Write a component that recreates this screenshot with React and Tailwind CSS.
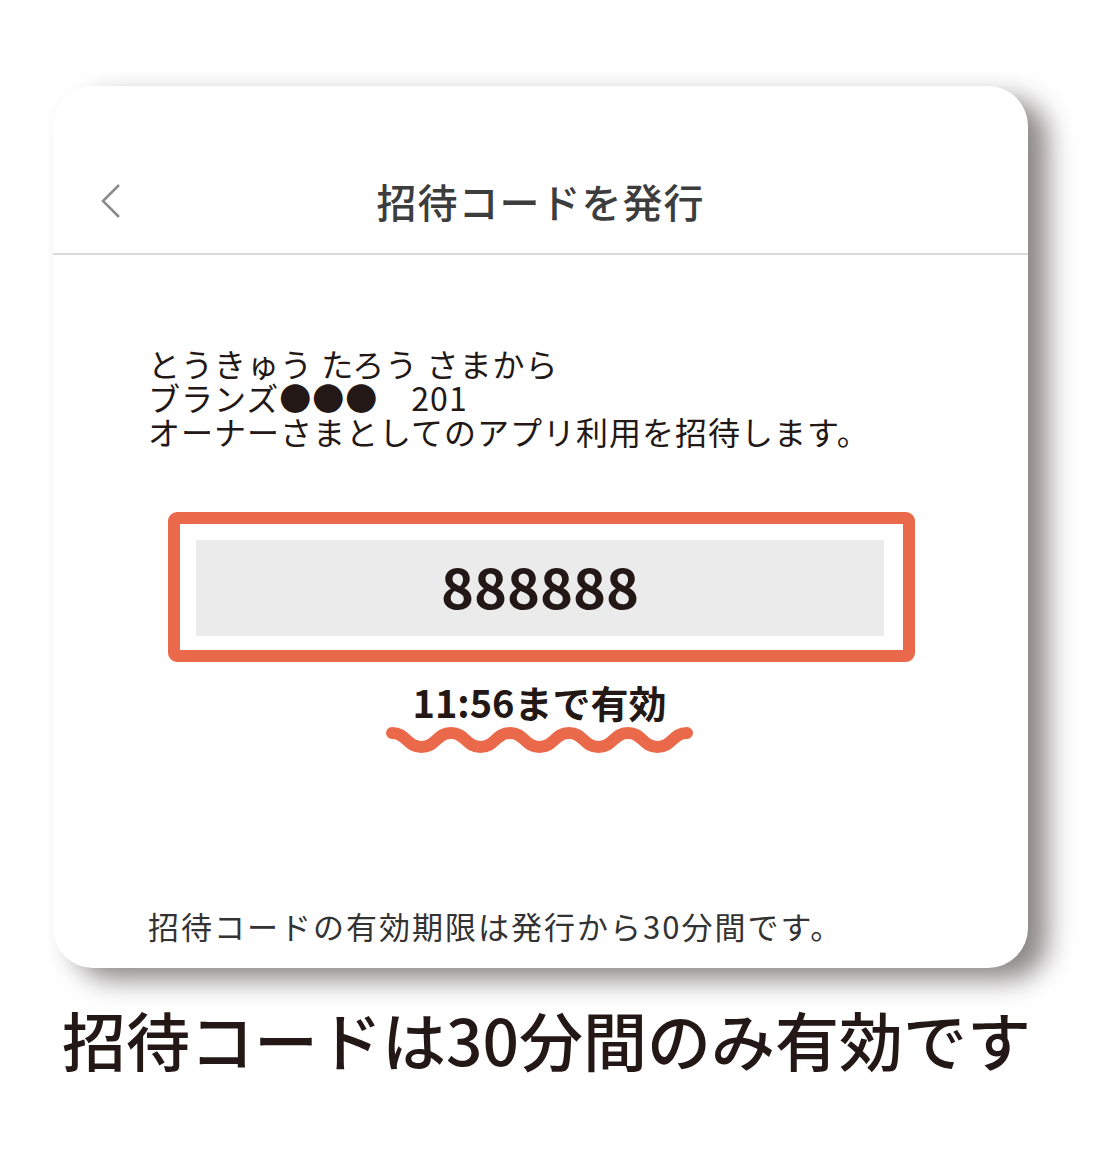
import React from "react";

const jp = { fontFamily: '"Noto Sans CJK JP", "Noto Sans", sans-serif' };

function Wave() {
  // 5 waves, crest at y=8, trough at y=22
  let d = "M6 8";
  for (let i = 0; i < 5; i++) {
    const x = 6 + i * 59;
    d += ` C ${x + 14.75} 8, ${x + 14.75} 22, ${x + 29.5} 22 C ${x + 44.25} 22, ${x + 44.25} 8, ${x + 59} 8`;
  }
  return (
    <svg width="307" height="30" viewBox="0 0 307 30" className="block">
      <path d={d} fill="none" stroke="#E9694A" strokeWidth="12" strokeLinecap="round" />
    </svg>
  );
}

export default function App() {
  return (
    <div className="w-[1104px] h-[1149px] bg-white overflow-hidden text-[#231815]" style={jp}>
      <div className="pt-[86px] pl-[53px]">
        <div className="w-[975px] h-[882px] bg-white rounded-[40px] shadow-[20px_12px_26px_rgba(50,40,40,0.55)] flex flex-col">
          <div className="h-[169px] border-b-2 border-[#d9d9d9] flex items-end pb-[28px] relative">
            <svg width="24" height="36" viewBox="0 0 24 36" className="absolute left-[46px] top-[97px]">
              <path d="M20 2 L4 18 L20 34" fill="none" stroke="#8a8a8a" strokeWidth="2.5" />
            </svg>
            <div className="w-full text-center text-[40px] leading-[48px] font-medium text-[#3d3d3d] tracking-[1px]">
              招待コードを発行
            </div>
          </div>

          <div className="pl-[95px] pt-[91px] text-[32px] leading-[34px] tracking-[1px]">
            <p>とうきゅう たろう さまから</p>
            <p>ブランズ●●●　201</p>
            <p>オーナーさまとしてのアプリ利用を招待します。</p>
          </div>

          <div className="mt-[64px] ml-[115px] w-[747px] h-[150px] border-[12px] border-[#E9694A] rounded-[9px] p-[16px] pr-[19px] pb-[14px]">
            <div className="h-full bg-[#EBEBEB] flex items-center justify-center text-[56px] font-bold leading-none pb-[6px]">
              888888
            </div>
          </div>

          <div className="flex flex-col items-center mt-[17px] ml-[-2px]">
            <div className="text-[38px] leading-[46px] font-bold">11:56まで有効</div>
            <Wave />
          </div>

          <div className="mt-auto pl-[95px] pb-[22px] text-[31px] leading-[40px] tracking-[2px] text-[#333]">
            招待コードの有効期限は発行から30分間です。
          </div>
        </div>
      </div>
      <div className="mt-[32px] pl-[62px] text-[64px] leading-[76px] font-medium whitespace-nowrap">
        招待コードは30分間のみ有効です
      </div>
    </div>
  );
}
